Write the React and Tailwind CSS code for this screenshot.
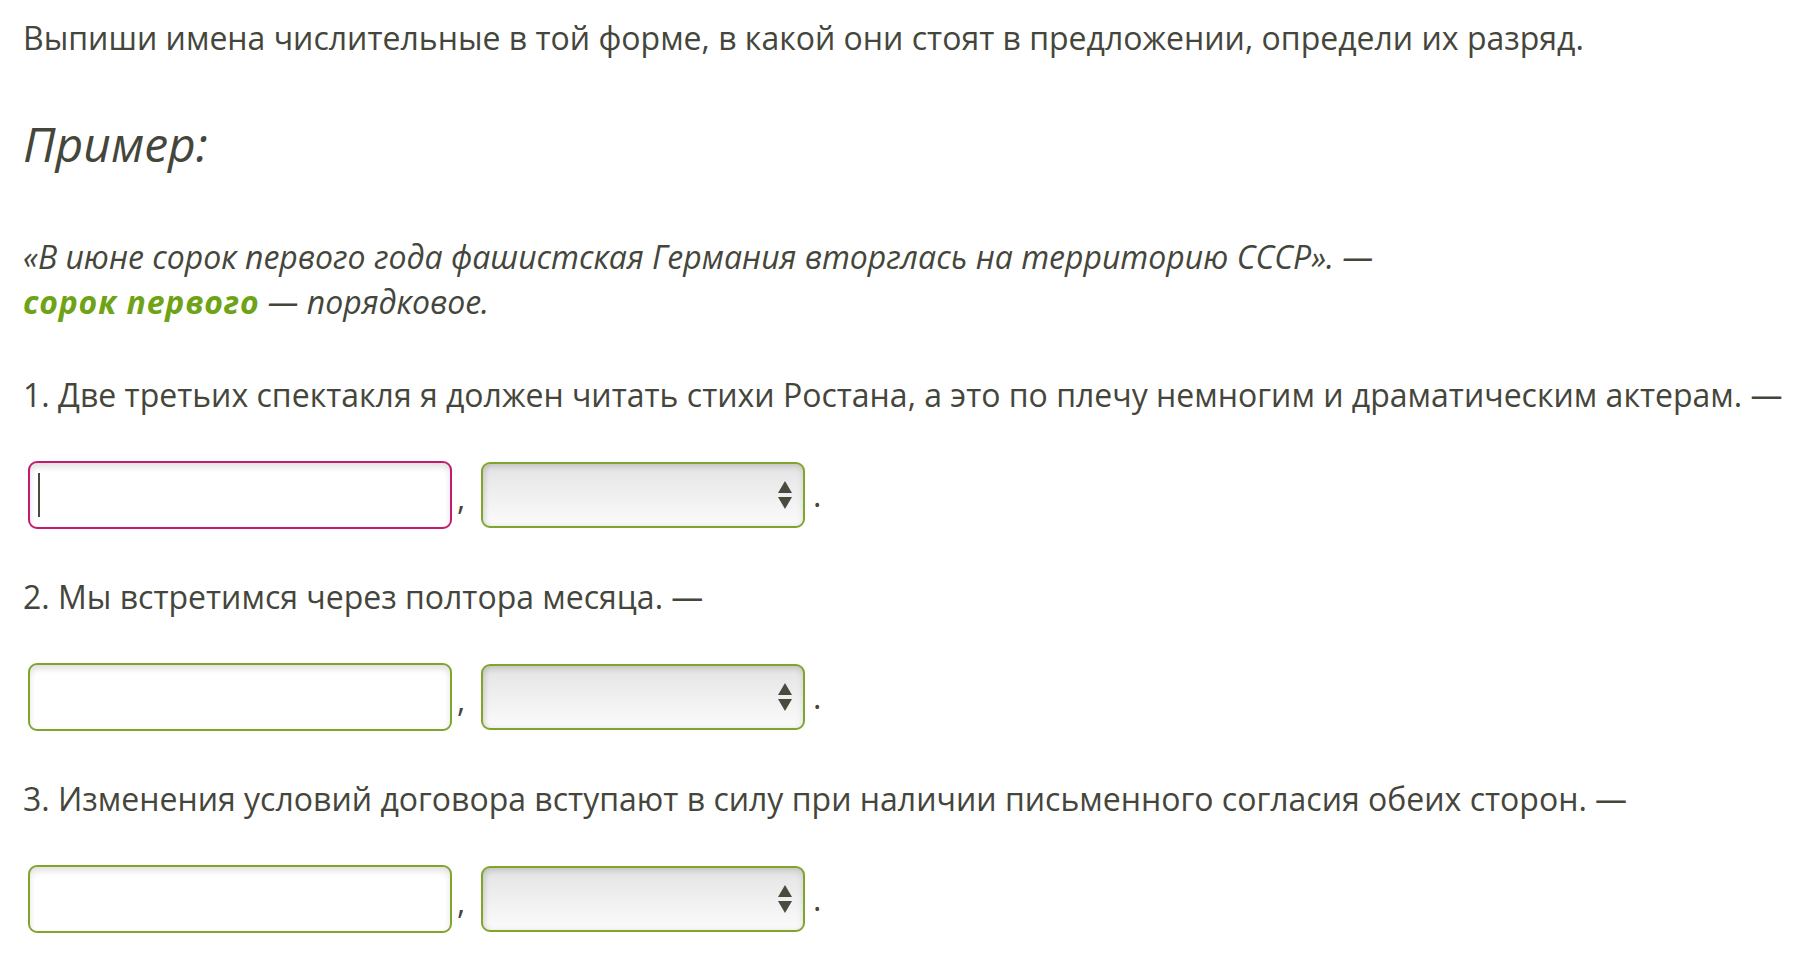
import React from "react";

const items = [
  "1. Две третьих спектакля я должен читать стихи Ростана, а это по плечу немногим и драматическим актерам. —",
  "2. Мы встретимся через полтора месяца. —",
  "3. Изменения условий договора вступают в силу при наличии письменного согласия обеих сторон. —",
];

const Arrows = () => (
  <svg width="16" height="30" viewBox="0 0 16 30" className="absolute right-[10px] top-1/2 -translate-y-1/2 pointer-events-none">
    <polygon points="8,1 15,13 1,13" fill="#4a4b3f" />
    <polygon points="1,17 15,17 8,29" fill="#4a4b3f" />
  </svg>
);

const AnswerRow = ({ focused }) => (
  <div className="flex items-center mt-[44px] ml-[5px]">
    <div
      className={
        "w-[424px] h-[68px] rounded-[9px] border-2 bg-white shadow-[inset_0_4px_6px_rgba(0,0,0,0.12)] flex items-center px-[8px] " +
        (focused ? "border-[#c41c6c]" : "border-[#7fa52d]")
      }
    >
      {focused && <div className="w-[2px] h-[44px] bg-[#4a4b3f]" />}
    </div>
    <span className="w-[29px] pl-[5px] pt-[6px] text-[32px] leading-none">,</span>
    <div className="relative w-[324px] h-[66px] rounded-[9px] border-2 border-[#7fa52d] bg-gradient-to-b from-[#e4e4e4] to-[#fbfbfb] shadow-[inset_0_3px_6px_rgba(0,0,0,0.12),inset_3px_0_5px_rgba(0,0,0,0.06)]">
      <Arrows />
    </div>
    <span className="ml-[8px] text-[32px] leading-none">.</span>
  </div>
);

export default function App() {
  return (
    <div
      className="min-h-screen bg-white text-[#45463b] px-[23px] pt-[16px]"
      style={{ fontFamily: '"Open Sans", "Noto Sans", sans-serif' }}
    >
      <p className="text-[32px] leading-[44px]">
        Выпиши имена числительные в той форме, в какой они стоят в предложении, определи их разряд.
      </p>
      <h3 className="italic text-[48px] leading-[60px] mt-[54px]">Пример:</h3>
      <p className="italic text-[32px] leading-[45px] mt-[60px]">
        «В июне сорок первого года фашистская Германия вторглась на территорию СССР». —
        <br />
        <span className="font-bold tracking-[0.8px] text-[#6ea316]">сорок первого</span> — порядковое.
      </p>
      {items.map((t, i) => (
        <div key={i} className={i === 0 ? "mt-[49px]" : "mt-[46px]"}>
          <p className="text-[32px] leading-[44px]">{t}</p>
          <AnswerRow focused={i === 0} />
        </div>
      ))}
    </div>
  );
}
